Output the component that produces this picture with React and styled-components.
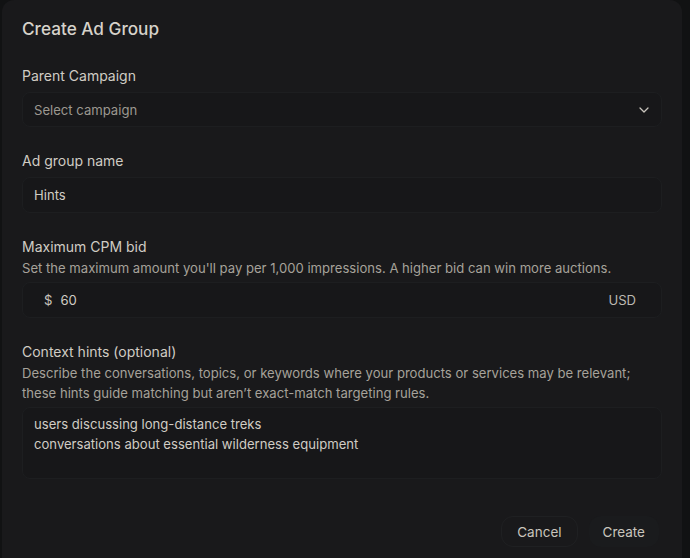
import React, { useState } from 'react';
import styled, { createGlobalStyle } from 'styled-components';

const GlobalStyle = createGlobalStyle`
  html, body {
    margin: 0;
    padding: 0;
    background: #111213;
    overflow: hidden;
  }
  * {
    box-sizing: border-box;
  }
`;

function ChevronDown() {
  return (
    <svg width="16" height="16" viewBox="0 0 24 24" fill="none" stroke="#c9c5bd" strokeWidth="1.9" strokeLinecap="round" strokeLinejoin="round">
      <path d="M6 9l6 6 6-6" />
    </svg>
  );
}

function App() {
  const [name, setName] = useState('Hints');
  const [bid, setBid] = useState('60');
  const [hints, setHints] = useState(
    'users discussing long-distance treks\nconversations about essential wilderness equipment'
  );

  return (
    <>
      <GlobalStyle />
      <Dialog>
        <Title>Create Ad Group</Title>

        <Field>
          <Label>Parent Campaign</Label>
          <SelectBox>
            <Placeholder>Select campaign</Placeholder>
            <ChevronDown />
          </SelectBox>
        </Field>

        <Field>
          <Label htmlFor="name">Ad group name</Label>
          <Input id="name" value={name} onChange={e => setName(e.target.value)} />
        </Field>

        <Field>
          <LabelGroup>
            <Label htmlFor="bid">Maximum CPM bid</Label>
            <Hint>Set the maximum amount you'll pay per 1,000 impressions. A higher bid can win more auctions.</Hint>
          </LabelGroup>
          <BidBox>
            <Currency>$</Currency>
            <BidInput id="bid" value={bid} onChange={e => setBid(e.target.value)} />
            <Unit>USD</Unit>
          </BidBox>
        </Field>

        <Field>
          <LabelGroup>
            <Label htmlFor="hints">Context hints (optional)</Label>
            <Hint>
              Describe the conversations, topics, or keywords where your products or services may be relevant;
              these hints guide matching but aren’t exact-match targeting rules.
            </Hint>
          </LabelGroup>
          <TextArea id="hints" rows={3} value={hints} onChange={e => setHints(e.target.value)} />
        </Field>

        <Footer>
          <Button $outlined>Cancel</Button>
          <Button>Create</Button>
        </Footer>
      </Dialog>
    </>
  );
}

const Dialog = styled.div`
  width: 680px;
  min-height: 600px;
  margin-left: 2px;
  padding: 15px 20px 0 20px;
  background: #19191b;
  border-radius: 12px;
  font-family: Inter, 'Noto Sans', sans-serif;
  color: #d5d1c9;
  display: flex;
  flex-direction: column;
`;

const Title = styled.h2`
  margin: 0 0 23px 0;
  font-size: 17.2px;
  line-height: 28px;
  font-weight: 500;
  color: #d6d2ca;
`;

const Field = styled.div`
  display: flex;
  flex-direction: column;
  gap: 6px;
  margin-bottom: 24px;
`;

const LabelGroup = styled.div`
  display: flex;
  flex-direction: column;
  gap: 1px;
  margin-bottom: -2px;
`;

const Label = styled.label`
  font-size: 14px;
  line-height: 20px;
  font-weight: 400;
  color: #d0ccc4;
`;

const Hint = styled.p`
  margin: 0;
  font-size: 13.1px;
  line-height: 20px;
  color: #a6a29a;
`;

const boxStyles = `
  background: #171719;
  border: 1px solid #1d1e20;
  border-radius: 8px;
  font-family: Inter, 'Noto Sans', sans-serif;
  font-size: 13.1px;
  color: #d0ccc4;
`;

const SelectBox = styled.div`
  ${boxStyles}
  height: 35px;
  display: flex;
  align-items: center;
  justify-content: space-between;
  padding: 0 9px 0 11px;
`;

const Placeholder = styled.span`
  color: #9c9890;
`;

const Input = styled.input`
  ${boxStyles}
  height: 36px;
  padding: 0 11px;
  outline: none;
`;

const BidBox = styled.div`
  ${boxStyles}
  height: 36px;
  display: flex;
  align-items: center;
  padding: 0 25px 0 21px;
  gap: 8px;
`;

const Currency = styled.span`
  color: #c9c5bd;
`;

const BidInput = styled.input`
  flex: 1;
  border: none;
  background: transparent;
  outline: none;
  padding: 0;
  font: inherit;
  color: #d0ccc4;
`;

const Unit = styled.span`
  color: #bdb9b1;
`;

const TextArea = styled.textarea`
  ${boxStyles}
  height: 72px;
  resize: none;
  padding: 6px 11px;
  line-height: 20px;
  outline: none;
`;

const Footer = styled.div`
  display: flex;
  justify-content: flex-end;
  gap: 11px;
  margin-top: 13px;
  padding-right: 3px;
`;

const Button = styled.button`
  height: 31px;
  padding: 0 ${p => (p.$outlined ? '15px' : '13px')};
  border-radius: 12px;
  border: 1px solid ${p => (p.$outlined ? '#1f2022' : 'transparent')};
  background: ${p => (p.$outlined ? 'transparent' : '#1a1b1d')};
  font-family: Inter, 'Noto Sans', sans-serif;
  font-size: 13.5px;
  font-weight: 400;
  color: #c9c5bd;
  cursor: pointer;
`;

export default App;
